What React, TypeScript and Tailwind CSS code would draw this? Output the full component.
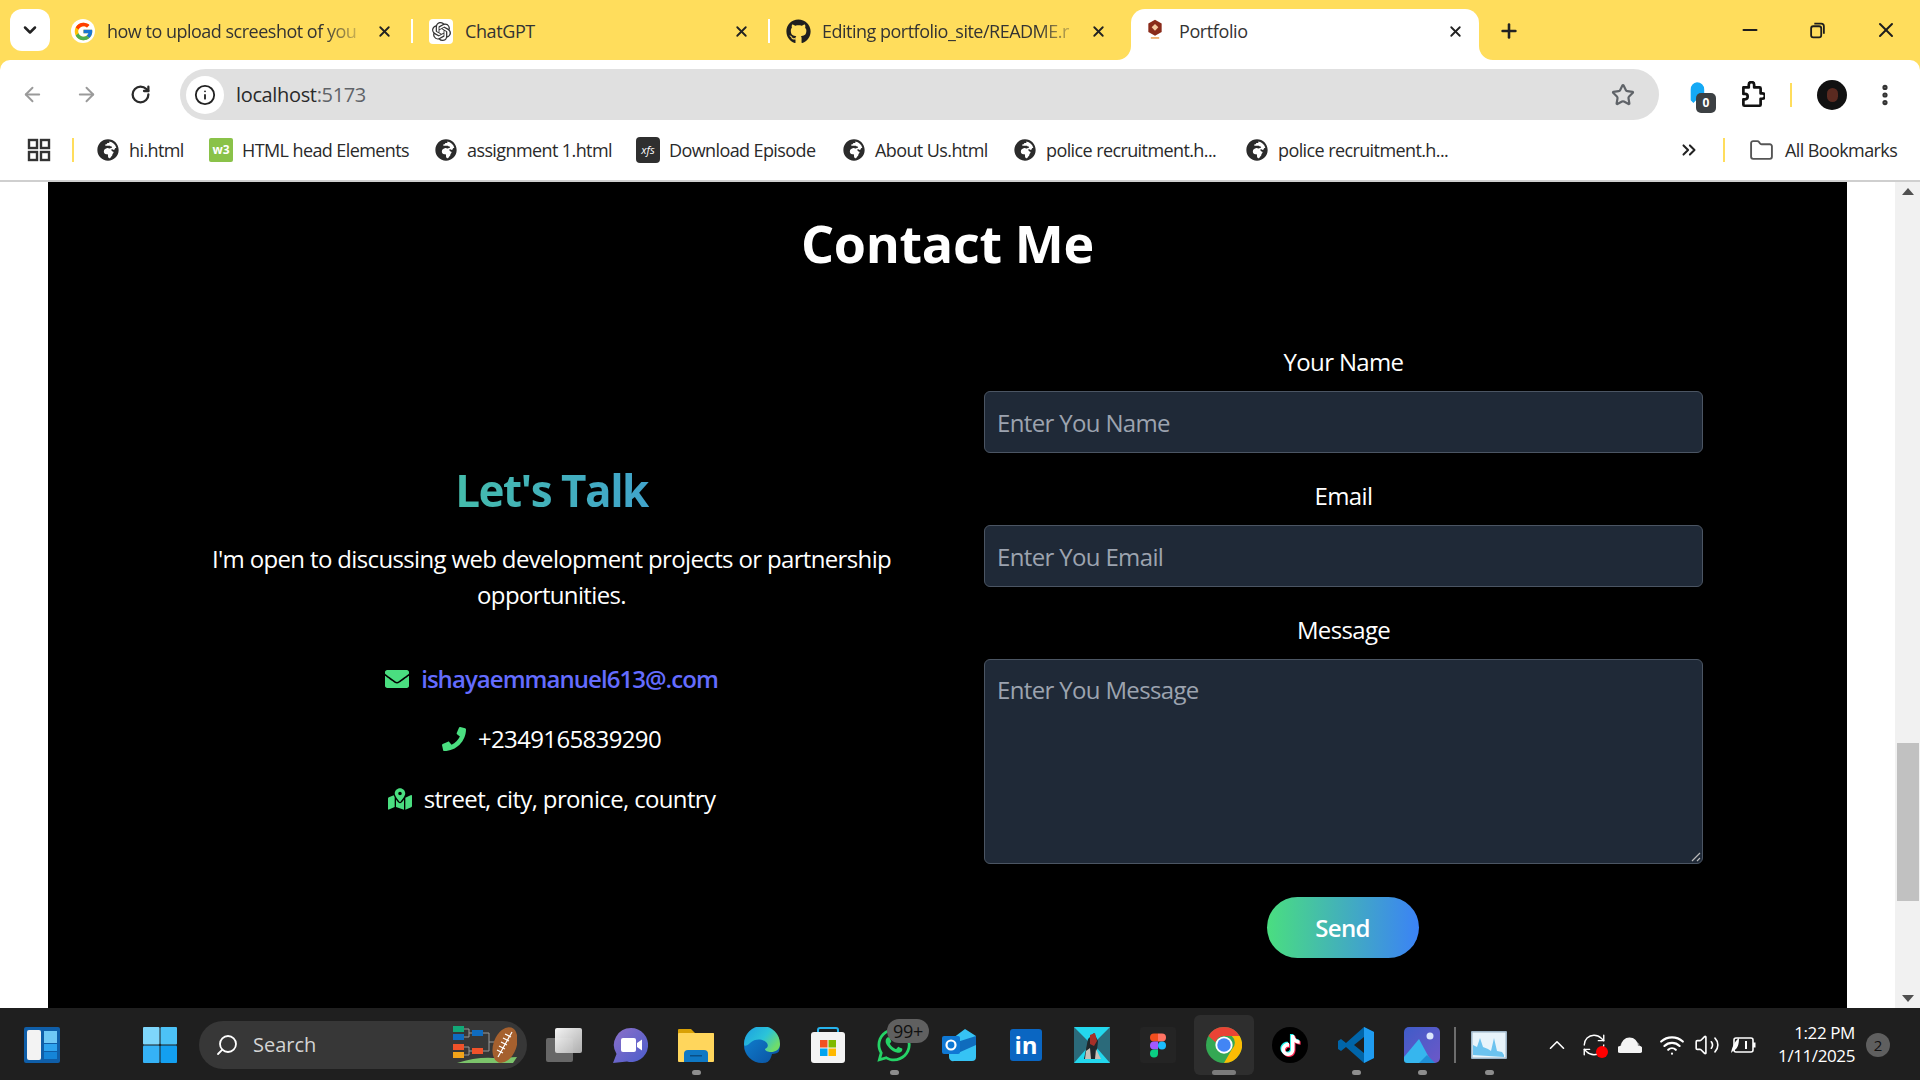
import React from "react";
import { FaEnvelope, FaPhone, FaMapMarkedAlt, FaGithub, FaGlobeAfrica, FaWhatsapp } from "react-icons/fa";
import { FcGoogle } from "react-icons/fc";
import { SiOpenai, SiTiktok } from "react-icons/si";
import {
  ChevronDown,
  X,
  Plus,
  Minus,
  ArrowLeft,
  ArrowRight,
  RotateCw,
  Info,
  Star,
  EllipsisVertical,
  ChevronsRight,
  Folder,
  Search,
  ChevronUp,
  Wifi,
  Volume2,
  RefreshCw,
} from "lucide-react";

const FONT = "font-['Open_Sans','Noto_Sans',sans-serif]";

const Tab = ({
  icon,
  title,
  fade,
  active,
  last,
  first,
}: {
  icon: React.ReactNode;
  title: string;
  fade?: boolean;
  active?: boolean;
  last?: boolean;
  first?: boolean;
}) => (
  <div
    className={
      active
        ? "relative flex h-[51px] w-[348px] items-start rounded-t-[14px] bg-white pl-[11px] pr-[15px] pt-[9px]"
        : last
        ? "flex h-[51px] w-[357px] items-start pl-[15px] pr-[20px] pt-[9px]"
        : first
        ? "flex h-[51px] w-[357px] items-start pl-[14px] pt-[9px]"
        : "flex h-[51px] w-[357px] items-start pl-[15px] pt-[9px]"
    }
  >
    <div className="flex h-[26px] w-[26px] shrink-0 items-center justify-center">{icon}</div>
    <div
      className={
        fade
          ? "ml-[11px] w-[262px] overflow-hidden whitespace-nowrap text-[18px] leading-[26px] tracking-[-0.5px] text-[#333] [mask-image:linear-gradient(90deg,#000_82%,transparent)]"
          : "ml-[11px] w-[228px] overflow-hidden whitespace-nowrap text-[18px] leading-[26px] tracking-[-0.4px] text-[#333]"
      }
    >
      {title}
    </div>
    <div className="ml-auto flex h-[26px] items-center">
      <X size={17} strokeWidth={2.6} className="text-[#222]" />
    </div>
    {!active && !last && <div className="ml-[18px] mt-[1px] h-[24px] w-[2px] shrink-0 bg-white" />}
    {active && (
      <>
        <svg viewBox="0 0 14 14" className="absolute bottom-0 left-[-14px] h-[14px] w-[14px]">
          <path d="M14 0v14H0a14 14 0 0 0 14-14z" fill="#fff" />
        </svg>
        <svg viewBox="0 0 14 14" className="absolute bottom-0 right-[-14px] h-[14px] w-[14px]">
          <path d="M0 0v14h14A14 14 0 0 1 0 0z" fill="#fff" />
        </svg>
      </>
    )}
  </div>
);

const Bookmark = ({ icon, label, width }: { icon: React.ReactNode; label: string; width: string }) => (
  <div className={`flex items-center gap-[9px] ${width}`}>
    <div className="flex h-[24px] w-[24px] shrink-0 items-center justify-center">{icon}</div>
    <span className="whitespace-nowrap text-[18px] tracking-[-0.6px] text-[#2a2a2a]">{label}</span>
  </div>
);

const Globe = () => <FaGlobeAfrica size={22} className="text-[#2b2b2b]" />;

const Field = ({ label, placeholder }: { label: string; placeholder: string }) => (
  <div className="flex flex-col">
    <label className="mb-[11px] text-center text-[24px] leading-[36px] tracking-[-0.65px] text-white">{label}</label>
    <input
      placeholder={placeholder}
      className="h-[62px] w-full rounded-md border border-[#4b5563] bg-[#1f2937] px-3 text-[24px] tracking-[-0.65px] text-white placeholder:text-[#9ca3af] outline-none"
    />
  </div>
);

const TaskIcon = ({
  children,
  dot,
  active,
}: {
  children: React.ReactNode;
  dot?: boolean;
  active?: boolean;
}) => (
  <div className="relative flex h-[70px] w-[66px] shrink-0 items-center justify-center">
    {active && <div className="absolute left-[3px] top-[5px] h-[60px] w-[60px] rounded-md bg-[#2e2e2e]" />}
    <div className="relative flex h-[36px] w-[36px] items-center justify-center">{children}</div>
    {dot && <div className="absolute bottom-[5px] left-[29px] h-[5px] w-[9px] rounded-full bg-[#8d8d8d]" />}
    {active && <div className="absolute bottom-[5px] left-[21px] h-[5px] w-[24px] rounded-full bg-[#7b7b7b]" />}
  </div>
);

const ChromeIcon = () => (
  <svg viewBox="0 0 48 48" className="h-[36px] w-[36px]">
    <circle cx="24" cy="24" r="24" fill="#34a853" />
    <path d="M24 0a24 24 0 0 1 20.800 12H24a12 12 0 0 0-11.400 8.200L3.200 12A24 24 0 0 1 24 0z" fill="#ea4335" />
    <path d="M44.800 12A24 24 0 0 1 24 48l10.400-18a12 12 0 0 0 0-18z" fill="#fbbc04" />
    <circle cx="24" cy="24" r="11.500" fill="#fff" />
    <circle cx="24" cy="24" r="9" fill="#4285f4" />
  </svg>
);

const App = () => {
  return (
    <div className={`flex h-screen w-[1920px] flex-col overflow-hidden bg-[#ffdd5c] ${FONT}`}>
      {/* tab strip */}
      <div className="flex h-[60px] shrink-0 items-end pl-[10px]">
        <div className="mb-[9px] flex h-[42px] w-[40px] shrink-0 items-center justify-center rounded-[12px] bg-white">
          <ChevronDown size={20} strokeWidth={3} className="text-[#222]" />
        </div>
        <div className="ml-[6px] flex">
          <Tab
            first
            fade
            title="how to upload screeshot of you"
            icon={
              <div className="flex h-[24px] w-[24px] items-center justify-center rounded-full bg-white">
                <FcGoogle size={21} />
              </div>
            }
          />
          <Tab
            title="ChatGPT"
            icon={
              <div className="flex h-[25px] w-[24px] items-center justify-center rounded-[4px] bg-white">
                <SiOpenai size={19} className="text-[#333]" />
              </div>
            }
          />
          <Tab fade last title="Editing portfolio_site/README.r" icon={<FaGithub size={25} className="text-[#1f1f1f]" />} />
        </div>
        <div className="ml-[4px]">
          <Tab
            active
            title="Portfolio"
            icon={
              <svg viewBox="0 0 20 24" className="mb-[5px] h-[20px] w-[18px]">
                <path d="M10 1l8 4.500v10L10 20l-8-4.500v-10z" fill="#8a2b1a" />
                <path d="M10 6l4 4-4 4-4-4z" fill="#f4c9a0" />
                <rect x="5" y="22" width="10" height="1.500" fill="#e88a2c" />
              </svg>
            }
          />
        </div>
        <div className="mb-[14px] ml-[18px] flex h-[30px] w-[24px] items-center justify-center">
          <Plus size={22} strokeWidth={2.8} className="text-[#222]" />
        </div>
        <div className="mb-[18px] ml-auto flex items-center gap-[48px] pr-[22px]">
          <Minus size={22} strokeWidth={2.4} className="text-[#1d1d1d]" />
          <svg viewBox="0 0 16 16" className="h-[17px] w-[17px]" fill="none" stroke="#1d1d1d" strokeWidth="1.700">
            <rect x="2" y="4" width="9.500" height="10.500" rx="2" />
            <path d="M5 1.500h6.500a2.500 2.500 0 0 1 2.500 2.500v7" />
          </svg>
          <X size={24} strokeWidth={2} className="text-[#1d1d1d]" />
        </div>
      </div>

      {/* toolbar */}
      <div className="flex h-[62px] shrink-0 items-center rounded-t-[10px] bg-white pt-[7px]">
        <div className="flex w-[180px] shrink-0 items-center pl-[21px]">
          <ArrowLeft size={23} strokeWidth={2} className="text-[#9a9a9a]" />
          <ArrowRight size={23} strokeWidth={2} className="ml-[31px] text-[#9a9a9a]" />
          <RotateCw size={21} strokeWidth={2.6} className="ml-[32px] text-[#2a2a2a]" />
        </div>
        <div className="flex h-[51px] w-[1479px] shrink-0 items-center rounded-full bg-[#e0e0e0] pl-[6px] pr-[24px]">
          <div className="flex h-[38px] w-[38px] items-center justify-center rounded-full bg-white">
            <Info size={22} strokeWidth={2} className="text-[#222]" />
          </div>
          <div className="ml-[12px] text-[20px] tracking-[-0.35px] text-[#2a2a2a]">
            localhost<span className="text-[#5f6368]">:5173</span>
          </div>
          <Star size={24} strokeWidth={2.2} className="ml-auto text-[#5f6368]" />
        </div>
        <div className="flex flex-1 items-center pl-[29px]">
          <div className="relative h-[32px] w-[24px]">
            <svg viewBox="0 0 20 26" className="mt-[2px] h-[24px] w-[18px]">
              <path d="M10 1a8 8 0 0 1 8 8v15l-3-3-3 3-3-3-3 3-3-3V9a8 8 0 0 1 7-8z" fill="#14a9f5" />
            </svg>
            <div className="absolute left-[8px] top-[14px] flex h-[20px] w-[20px] items-center justify-center rounded-[5px] bg-[#3c4043] text-[12px] font-bold text-white">
              0
            </div>
          </div>
          <svg viewBox="0 0 24 26" className="ml-[27px] h-[28px] w-[26px]" fill="none" stroke="#111" strokeWidth="2.500" strokeLinejoin="round">
            <path d="M4 6h5V3.500a2.500 2.500 0 0 1 5 0V6h5a1 1 0 0 1 1 1v4.500h1.500a2.500 2.500 0 0 1 0 5H20V22a1 1 0 0 1-1 1H5a1 1 0 0 1-1-1v-5h1.500a2.500 2.500 0 0 0 0-5H4V7z" />
          </svg>
          <div className="ml-[25px] h-[24px] w-[2px] bg-[#ffdd5c]" />
          <div className="ml-[25px] flex h-[30px] w-[30px] items-center justify-center rounded-full bg-[#111]">
            <div className="h-[14px] w-[11px] rounded-full bg-[#5a2a20]" />
          </div>
          <EllipsisVertical size={26} strokeWidth={2.8} className="ml-[25px] text-[#333]" />
        </div>
      </div>

      {/* bookmarks */}
      <div className="flex h-[60px] shrink-0 items-center border-b-2 border-[#cfcfcf] bg-white pb-[2px] pl-[27px]">
        <svg viewBox="0 0 24 24" className="h-[24px] w-[24px]" fill="none" stroke="#333" strokeWidth="2.400">
          <rect x="2" y="2" width="8" height="8" />
          <rect x="14" y="2" width="8" height="8" />
          <rect x="2" y="14" width="8" height="8" />
          <rect x="14" y="14" width="8" height="8" />
        </svg>
        <div className="ml-[21px] h-[24px] w-[2px] bg-[#ffdd5c]" />
        <div className="ml-[22px] flex items-center">
          <Bookmark width="w-[113px]" icon={<Globe />} label="hi.html" />
          <Bookmark
            width="w-[225px]"
            label="HTML head Elements"
            icon={
              <div className="flex h-[24px] w-[24px] items-center justify-center rounded-[2px] bg-[#8ac249] text-[12px] font-bold text-white">
                w3
              </div>
            }
          />
          <Bookmark width="w-[202px]" icon={<Globe />} label="assignment 1.html" />
          <Bookmark
            width="w-[206px]"
            label="Download Episode"
            icon={
              <div className="flex h-[26px] w-[24px] items-center justify-center rounded-[4px] bg-[#2f2f2f] text-[11px] italic text-white">
                xfs
              </div>
            }
          />
          <Bookmark width="w-[171px]" icon={<Globe />} label="About Us.html" />
          <Bookmark width="w-[232px]" icon={<Globe />} label="police recruitment.h..." />
          <Bookmark width="w-[200px]" icon={<Globe />} label="police recruitment.h..." />
        </div>
        <ChevronsRight size={22} strokeWidth={2.2} className="ml-[233px] text-[#222]" />
        <div className="ml-[23px] h-[24px] w-[2px] bg-[#ffdd5c]" />
        <Folder size={25} strokeWidth={1.800} className="ml-[24px] text-[#555]" />
        <span className="ml-[11px] whitespace-nowrap text-[18px] tracking-[-0.6px] text-[#2a2a2a]">All Bookmarks</span>
      </div>

      {/* page */}
      <div className="flex min-h-0 flex-1 bg-white">
        <div className="w-[48px] shrink-0" />
        <div className="w-[1799px] shrink-0 bg-black">
          <h1 className="mt-[25px] text-center text-[52px] font-bold leading-[72px] tracking-[-0.3px] text-white">Contact Me</h1>
          <div className="mt-[65px] flex">
            <div className="ml-[144px] flex w-[719px] shrink-0 flex-col items-center justify-center pb-[28px] text-center">
              <h2 className="w-full bg-linear-to-r/srgb from-[#4ade80] to-[#3b82f6] bg-clip-text text-[44px] font-bold leading-[66px] tracking-[-1.5px] text-transparent">
                Let's Talk
              </h2>
              <p className="mt-[18px] w-[700px] text-[24px] leading-[36px] tracking-[-0.65px] text-white">
                I'm open to discussing web development projects or partnership opportunities.
              </p>
              <div className="mt-[48px] flex flex-col items-center gap-[24px] text-[24px] leading-[36px] tracking-[-0.65px] text-white">
                <div className="flex items-center gap-[12px]">
                  <FaEnvelope size={24} className="text-[#4ade80]" />
                  <a className="font-semibold tracking-[-0.95px] text-[#646cff]">ishayaemmanuel613@.com</a>
                </div>
                <div className="flex items-center gap-[12px]">
                  <FaPhone size={24} className="text-[#4ade80]" />
                  <span>+2349165839290</span>
                </div>
                <div className="flex items-center gap-[12px]">
                  <FaMapMarkedAlt size={24} className="text-[#4ade80]" />
                  <span>street, city, pronice, country</span>
                </div>
              </div>
            </div>
            <div className="ml-[73px] flex w-[719px] shrink-0 flex-col gap-[25px]">
              <Field label="Your Name" placeholder="Enter You Name" />
              <Field label="Email" placeholder="Enter You Email" />
              <div className="flex flex-col">
                <label className="mb-[11px] text-center text-[24px] leading-[36px] tracking-[-0.65px] text-white">Message</label>
                <div className="relative">
                  <textarea
                    placeholder="Enter You Message"
                    className="block h-[205px] w-full resize-none rounded-md border border-[#4b5563] bg-[#1f2937] px-3 py-[12px] text-[24px] leading-[36px] tracking-[-0.65px] text-white placeholder:text-[#9ca3af] outline-none"
                  />
                  <svg viewBox="0 0 10 10" className="absolute bottom-[2px] right-[2px] h-[10px] w-[10px]" stroke="#b8b8b8" strokeWidth="1.200">
                    <path d="M1 9L9 1M6 9l3-3" />
                  </svg>
                </div>
              </div>
              <button className="mx-auto mt-[8px] h-[61px] w-[152px] -translate-x-px rounded-full bg-linear-to-r/srgb from-[#4ade80] to-[#3b82f6] text-[24px] font-semibold tracking-[-0.65px] text-white">
                Send
              </button>
            </div>
          </div>
        </div>
        <div className="w-[48px] shrink-0" />
        <div className="flex w-[25px] shrink-0 flex-col items-center bg-[#f1f1f1] py-[6px]">
          <div className="h-0 w-0 border-x-[6px] border-b-[7px] border-x-transparent border-b-[#505050]" />
          <div className="mt-[548px] h-[158px] w-[22px] bg-[#c1c1c1]" />
          <div className="mt-auto h-0 w-0 border-x-[6px] border-t-[7px] border-x-transparent border-t-[#505050]" />
        </div>
      </div>

      {/* taskbar */}
      <div className="relative flex h-[72px] shrink-0 items-center bg-[#1f1f1f] pl-[24px] pt-[2px]">
        <svg viewBox="0 0 36 36" className="h-[36px] w-[36px] shrink-0">
          <rect width="36" height="36" rx="2" fill="#0f5ea8" />
          <rect x="3" y="3" width="14" height="30" rx="2" fill="#f3f3f3" />
          <rect x="20" y="4" width="13" height="12" fill="#6fc8f5" />
          <rect x="20" y="17" width="13" height="7" fill="#2ea3ee" />
          <rect x="20" y="25" width="13" height="7" fill="#1585d8" />
        </svg>
        <svg viewBox="0 0 36 36" className="ml-[82px] h-[36px] w-[36px] shrink-0">
          <rect x="1" y="0" width="16.500" height="17.500" rx="1" fill="#7ed6fb" />
          <rect x="18.500" y="0" width="16.500" height="17.500" rx="1" fill="#4cc2f7" />
          <rect x="1" y="18.500" width="16.500" height="17.500" rx="1" fill="#35b2f6" />
          <rect x="18.500" y="18.500" width="16.500" height="17.500" rx="1" fill="#139ff0" />
        </svg>
        <div className="ml-[21px] flex h-[48px] w-[328px] shrink-0 items-center justify-between rounded-full bg-[#373737] pl-[16px] pr-[10px]">
          <div className="flex items-center gap-[14px]">
            <Search size={24} strokeWidth={1.800} className="-scale-x-100 text-white" />
            <span className="text-[20px] text-[#d4d4d4]">Search</span>
          </div>
          <svg viewBox="0 0 66 38" className="h-[38px] w-[66px]">
            <rect x="2" y="0" width="11" height="6" fill="#12a877" />
            <rect x="2" y="8" width="11" height="6" fill="#0f6cc0" />
            <rect x="21" y="4" width="11" height="6" fill="#0f6cc0" />
            <rect x="2" y="18" width="11" height="6" fill="#f0522a" />
            <rect x="2" y="26" width="11" height="6" fill="#f2a41a" />
            <rect x="21" y="22" width="11" height="6" fill="#f0522a" />
            <path d="M13 3h5v8h-5M13 21h5v8h-5M18 7h3M18 25h3M32 7h6v18h-6M38 16h6" fill="none" stroke="#9a9a9a" strokeWidth="1" />
            <path d="M6 37 Q25 31 42 32 L66 31 L62 37z" fill="#7cc46b" />
            <ellipse cx="54" cy="19" rx="11.500" ry="18.500" transform="rotate(20 54 19)" fill="#a5602e" />
            <path d="M47 31 L61 6" stroke="#fff" strokeWidth="1.200" />
            <path d="M46 24l6 3M48 20l6 3M50 16l6 3M52 12l6 3M54 8l6 3" stroke="#fff" strokeWidth="1.200" />
          </svg>
        </div>
        <div className="ml-[4px] flex items-center">
          <TaskIcon>
            <div className="relative h-[34px] w-[36px]">
              <div className="absolute bottom-0 left-0 h-[24px] w-[27px] rounded-[2px] bg-[#676767]" />
              <div className="absolute right-0 top-0 h-[25px] w-[27px] rounded-[2px] bg-gradient-to-br from-white to-[#b5b5b5] opacity-95" />
            </div>
          </TaskIcon>
          <TaskIcon>
            <svg viewBox="0 0 36 36" className="h-[36px] w-[36px]">
              <defs>
                <linearGradient id="meet" x1="0" y1="0" x2="1" y2="1">
                  <stop offset="0" stopColor="#8c70c8" />
                  <stop offset="1" stopColor="#4a5ccc" />
                </linearGradient>
              </defs>
              <path d="M19 1a17 17 0 1 1-4 33.500L1 36l3.500-9A17 17 0 0 1 19 1z" fill="url(#meet)" />
              <rect x="9" y="11" width="15" height="14" rx="2" fill="#fff" />
              <path d="M25 16l5-3.500v11L25 20z" fill="#fff" />
            </svg>
          </TaskIcon>
          <TaskIcon dot>
            <svg viewBox="0 0 36 34" className="h-[34px] w-[36px]">
              <path d="M0 2a1 1 0 0 1 1-1h12l4 4h18a1 1 0 0 1 1 1v4H0z" fill="#d9a106" />
              <rect x="0" y="5" width="36" height="29" rx="1" fill="#ffd65c" />
              <rect x="6" y="24" width="24" height="10" fill="#ffc13d" />
              <path d="M6 34V26a4 4 0 0 1 4-4h16a4 4 0 0 1 4 4v8z" fill="#0f78c4" />
              <rect x="12" y="27" width="12" height="1.500" fill="#0a4f85" />
            </svg>
          </TaskIcon>
          <TaskIcon>
            <svg viewBox="0 0 36 36" className="h-[36px] w-[36px]">
              <defs>
                <linearGradient id="edgea" x1="0" y1="0" x2="1" y2="0.600">
                  <stop offset="0" stopColor="#1b9de2" />
                  <stop offset="0.600" stopColor="#2bc4d8" />
                  <stop offset="1" stopColor="#6fdc6a" />
                </linearGradient>
                <linearGradient id="edgeb" x1="0" y1="0" x2="1" y2="1">
                  <stop offset="0" stopColor="#0f86d6" />
                  <stop offset="1" stopColor="#0b4f9e" />
                </linearGradient>
              </defs>
              <circle cx="18" cy="18" r="18" fill="url(#edgeb)" />
              <path d="M0 17A18 18 0 0 1 36 17c0 6-5 8-9 8-3 0-6-1-6-3 3-1 4-4 1-7-3-3-11-4-16 1-3 3-6 4-6 1z" fill="url(#edgea)" />
              <path d="M36 24c-2 7-9 12-14 12 4-2 5-5 6-9 3 0 6-1 8-3z" fill="#1f1f1f" />
            </svg>
          </TaskIcon>
          <TaskIcon>
            <svg viewBox="0 0 36 36" className="h-[36px] w-[36px]">
              <path d="M8 8V3a2 2 0 0 1 2-2h16a2 2 0 0 1 2 2v5" fill="none" stroke="#26b3ec" strokeWidth="2" />
              <rect x="1" y="5" width="34" height="31" rx="3" fill="#f4f4f4" />
              <rect x="10" y="13" width="7.500" height="7.500" fill="#f25022" />
              <rect x="18.500" y="13" width="7.500" height="7.500" fill="#7fba00" />
              <rect x="10" y="21.500" width="7.500" height="7.500" fill="#00a4ef" />
              <rect x="18.500" y="21.500" width="7.500" height="7.500" fill="#ffb900" />
            </svg>
          </TaskIcon>
          <TaskIcon dot>
            <FaWhatsapp size={38} className="shrink-0 text-[#25d366]" />
            <div className="absolute left-[11px] top-[-8px] flex h-[24px] w-[42px] items-center justify-center rounded-full bg-[#606060] text-[18px] tracking-[-0.3px] text-[#111]">
              99+
            </div>
          </TaskIcon>
          <TaskIcon>
            <svg viewBox="0 0 36 36" className="h-[36px] w-[36px]">
              <path d="M7 14L23 2l11 7v21a4 4 0 0 1-4 4H12a4 4 0 0 1-5-4z" fill="#36c3f4" />
              <path d="M12 16L34 9v9L16 26z" fill="#0f6cbd" />
              <rect x="0" y="9" width="18" height="18" rx="2" fill="#0f78d4" />
              <circle cx="9" cy="18" r="4.500" fill="none" stroke="#fff" strokeWidth="2.200" />
            </svg>
          </TaskIcon>
          <TaskIcon>
            <div className="flex h-[32px] w-[32px] items-center justify-center rounded-[3px] bg-[#0a66c2] text-[24px] font-bold leading-none text-white">
              in
            </div>
          </TaskIcon>
          <TaskIcon>
            <svg viewBox="0 0 36 36" className="h-[36px] w-[36px]">
              <rect width="36" height="36" fill="#23d8ee" />
              <path d="M0 0l14 14L22 14 36 0v36L22 20 14 20 0 36z" fill="#2b6a7a" />
              <path d="M14 12l6-6 4 8-2 18H10z" fill="#20282c" />
              <path d="M16 8l5-2 2 8-3 5-4-2z" fill="#a83028" />
              <path d="M12 24l4-3 1 11h-6zM22 22l5 10h-6z" fill="#c9c0b8" />
            </svg>
          </TaskIcon>
          <TaskIcon>
            <div className="flex h-[36px] w-[36px] items-center justify-center rounded-[3px] bg-[#242424]">
              <svg viewBox="0 0 16 24" className="h-[25px] w-[16px]">
                <path d="M0 4a4 4 0 0 1 4-4h4v8H4a4 4 0 0 1-4-4z" fill="#f24e1e" />
                <path d="M8 0h4a4 4 0 0 1 0 8H8z" fill="#ff7262" />
                <path d="M0 12a4 4 0 0 1 4-4h4v8H4a4 4 0 0 1-4-4z" fill="#a259ff" />
                <circle cx="12" cy="12" r="4" fill="#1abcfe" />
                <path d="M0 20a4 4 0 0 1 4-4h4v4a4 4 0 0 1-8 0z" fill="#0acf83" />
              </svg>
            </div>
          </TaskIcon>
          <TaskIcon active>
            <ChromeIcon />
          </TaskIcon>
          <TaskIcon>
            <div className="flex h-[36px] w-[36px] items-center justify-center rounded-full bg-black">
              <div className="relative h-[21px] w-[21px]">
                <SiTiktok size={21} className="absolute left-[-1px] top-[-1px] text-[#25f4ee]" />
                <SiTiktok size={21} className="absolute left-[1px] top-[1px] text-[#fe2c55]" />
                <SiTiktok size={21} className="absolute left-0 top-0 text-white" />
              </div>
            </div>
          </TaskIcon>
          <TaskIcon dot>
            <svg viewBox="0 0 36 36" className="h-[36px] w-[36px]">
              <path d="M26 0l10 5v26l-10 5L8 20l-5 4-3-2v-8l3-2 5 4z" fill="#0065a9" />
              <path d="M26 0l10 5v26l-10 5z" fill="#1f9cf0" />
              <path d="M26 10v16l-10-8z" fill="#1f1f1f" />
            </svg>
          </TaskIcon>
          <TaskIcon dot>
            <svg viewBox="0 0 36 36" className="h-[36px] w-[36px]">
              <defs>
                <linearGradient id="pic" x1="0" y1="0" x2="1" y2="1">
                  <stop offset="0" stopColor="#3f5cc8" />
                  <stop offset="1" stopColor="#6d58c8" />
                </linearGradient>
              </defs>
              <rect width="36" height="36" rx="5" fill="url(#pic)" />
              <circle cx="26" cy="9" r="3.500" fill="#dbe6fb" />
              <path d="M3 36a3 3 0 0 1-3-3v-3L15 12l13 24z" fill="#36b6ee" />
              <path d="M15 36l8-8 8 8z" fill="#1f8fd6" />
            </svg>
          </TaskIcon>
          <div className="ml-[-1px] h-[36px] w-[2px] bg-[#6d6d6d]" />
          <TaskIcon dot>
            <svg viewBox="0 0 36 28" className="h-[28px] w-[36px]">
              <rect width="36" height="28" rx="1" fill="#9db4c6" />
              <rect x="1.500" y="1.500" width="33" height="25" fill="#e8f4fb" />
              <path d="M2 24V14l4 2 3-9 3 9 5 2 3 2 3-13 3 13 5 1 2 3v2z" fill="#6cc3ef" />
            </svg>
          </TaskIcon>
        </div>

        {/* tray */}
        <ChevronUp size={26} strokeWidth={1.500} className="ml-[22px] text-white" />
        <div className="relative ml-[11px] h-[26px] w-[26px]">
          <RefreshCw size={26} strokeWidth={1.300} className="text-white" />
          <div className="absolute bottom-0 right-[-1px] h-[12px] w-[12px] rounded-full bg-[#f00]" />
        </div>
        <svg viewBox="0 0 24 16" className="ml-[11px] h-[16px] w-[24px]">
          <path d="M6 14a4 4 0 0 1 0-8 7 7 0 0 1 13-1 5 5 0 0 1 0 9z" fill="#8d8d8d" />
          <path d="M2 16a3.500 3.500 0 0 1 1-7 6 6 0 0 1 17 0 3.500 3.500 0 0 1 2 7z" fill="#f4f4f4" />
        </svg>
        <Wifi size={26} strokeWidth={2} className="ml-[17px] text-white" />
        <Volume2 size={26} strokeWidth={1.500} className="ml-[9px] text-white" />
        <svg viewBox="0 0 26 18" className="ml-[10px] h-[18px] w-[26px]" fill="none">
          <rect x="4" y="2" width="19" height="14" rx="2" stroke="#fff" strokeWidth="1.600" />
          <rect x="23" y="6.500" width="2.500" height="5" fill="#fff" />
          <path d="M1 17c1-5 3-11 8-15 0 6-1 11-6 13z" fill="#fff" />
          <rect x="15" y="5" width="2" height="8" fill="#fff" />
        </svg>
        <div className="ml-[22px] mt-[-2px] flex w-[77px] flex-col items-end text-[17px] leading-[23px] tracking-[-0.4px] text-white">
          <span className="whitespace-nowrap">1:22 PM</span>
          <span className="whitespace-nowrap">1/11/2025</span>
        </div>
        <div className="ml-[11px] flex h-[24px] w-[24px] items-center justify-center rounded-full bg-[#5f5f5f] text-[15px] text-[#111]">
          2
        </div>
      </div>
    </div>
  );
};

export default App;
